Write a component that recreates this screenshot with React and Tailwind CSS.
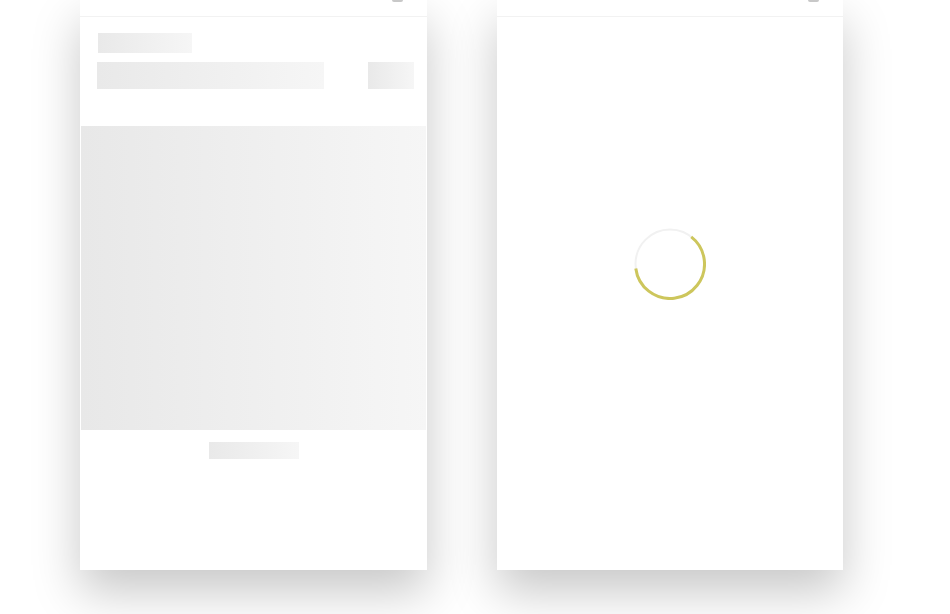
// App.jsx — two phone screens: skeleton loading state and spinner state
import React from 'react';

function StatusBar() {
  return (
    <div className="relative h-[17px] border-b border-[#f2f2f2]">
      <div className="absolute top-0 right-[24px] w-[11px] h-[2px] bg-[#c8c8c8] rounded-b-sm" />
    </div>
  );
}

function Bone({ className }) {
  return (
    <div className={`bg-gradient-to-r from-[#e9e9e9] to-[#f6f6f6] ${className}`} />
  );
}

function SkeletonScreen() {
  return (
    <div className="w-[347px] h-[570px] bg-white shadow-[0_22px_45px_rgba(0,0,0,0.22)] flex flex-col">
      <StatusBar />
      <div className="px-[17px] pt-[16px]">
        <Bone className="w-[94px] h-[20px] ml-[1px]" />
        <div className="flex justify-between mt-[9px]">
          <Bone className="w-[227px] h-[27px]" />
          <Bone className="w-[46px] h-[27px] mr-[-4px]" />
        </div>
      </div>
      <div className="mt-[37px] mx-[1px] h-[304px] bg-gradient-to-r from-[#e8e8e8] via-[#efefef] to-[#f6f6f6]" />
      <div className="flex justify-center mt-[12px]">
        <Bone className="w-[90px] h-[17px]" />
      </div>
    </div>
  );
}

function SpinnerScreen() {
  return (
    <div className="w-[346px] h-[570px] bg-white shadow-[0_22px_45px_rgba(0,0,0,0.22)] flex flex-col">
      <StatusBar />
      <div className="flex-1 flex justify-center pt-[211px]">
        <svg width="72" height="72" viewBox="0 0 72 72">
          <circle cx="36" cy="36" r="34.5" fill="none" stroke="#f1f1f1" strokeWidth="2" />
          <circle
            cx="36"
            cy="36"
            r="34.5"
            fill="none"
            stroke="#cdc65c"
            strokeWidth="3"
            strokeDasharray="135 300"
            transform="rotate(-52 36 36)"
          />
        </svg>
      </div>
    </div>
  );
}

export default function App() {
  return (
    <div className="w-[950px] h-[614px] bg-white overflow-hidden flex gap-[70px] pl-[80px]">
      <SkeletonScreen />
      <SpinnerScreen />
    </div>
  );
}
